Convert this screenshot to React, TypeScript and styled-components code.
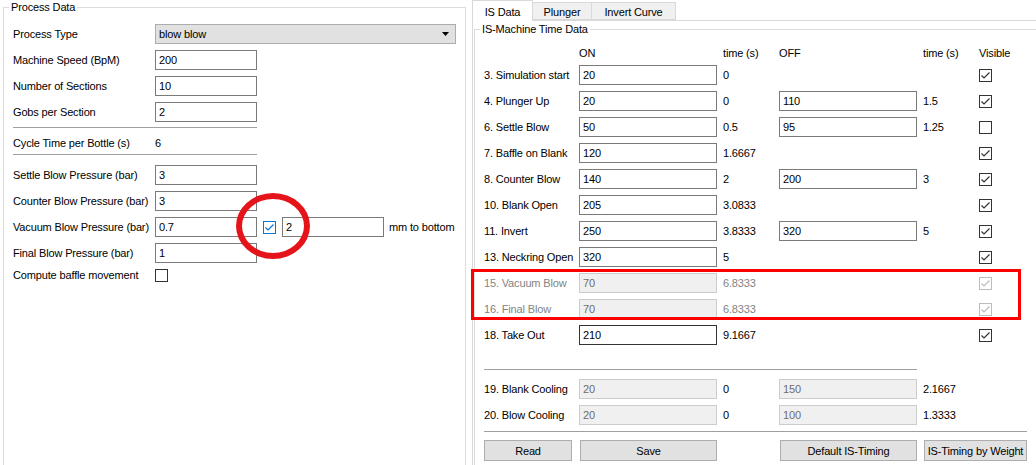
import React from "react";
import styled, { createGlobalStyle } from "styled-components";

const GlobalStyle = createGlobalStyle`
  body {
    margin: 0;
    background: #ffffff;
    font-family: "Liberation Sans", Arial, sans-serif;
    font-size: 11px;
    letter-spacing: -0.15px;
    color: #000000;
  }
`;

const Window = styled.div`
  position: relative;
  display: flex;
  width: 1036px;
  height: 465px;
  overflow: hidden;
  background: #ffffff;
`;

const GroupBox = styled.fieldset<{ $width: number; $left: number; $top?: number }>`
  box-sizing: border-box;
  flex: none;
  min-width: 0;
  width: ${p => p.$width}px;
  height: 520px;
  margin: ${p => p.$top ?? 0}px 0 0 ${p => p.$left}px;
  padding: 0;
  border: 1px solid #dcdcdc;
`;

const GroupTitle = styled.legend`
  margin-left: 5px;
  padding: 0 2px;
  line-height: 14px;
  font-size: 11px;
`;

const ProcessForm = styled.div`
  display: flex;
  flex-direction: column;
  padding: 7px 0 0 9px;
`;

const FormRow = styled.div<{ $h?: number }>`
  display: flex;
  align-items: center;
  height: ${p => p.$h ?? 26}px;
`;

const FieldLabel = styled.span`
  flex: none;
  width: 142px;
  white-space: nowrap;
`;

const TextField = styled.input<{ $w?: number; $focus?: boolean }>`
  box-sizing: border-box;
  flex: none;
  width: ${p => (p.$w ? `${p.$w}px` : "100%")};
  height: 20px;
  margin: 0;
  padding: 0 3px;
  border: 1px solid ${p => (p.disabled ? "#cccccc" : p.$focus ? "#333333" : "#7a7a7a")};
  background: ${p => (p.disabled ? "#f0f0f0" : "#ffffff")};
  color: ${p => (p.disabled ? "#6d6d6d" : "#000000")};
  font-family: inherit;
  font-size: 11px;
  letter-spacing: inherit;
  outline: none;
`;

const ComboBox = styled.div`
  box-sizing: border-box;
  display: flex;
  align-items: center;
  justify-content: space-between;
  width: 301px;
  height: 20px;
  padding: 0 6px 0 3px;
  border: 1px solid #adadad;
  background: #e1e1e1;
`;

const Divider = styled.div<{ $w: number; $mt: number; $mb: number }>`
  width: ${p => p.$w}px;
  height: 1px;
  margin: ${p => p.$mt}px 0 ${p => p.$mb}px;
  background: #a0a0a0;
`;

const Gap = styled.span<{ $w: number }>`
  flex: none;
  width: ${p => p.$w}px;
`;

const Box = styled.span<{ $tone: "dark" | "muted" | "blue" }>`
  box-sizing: border-box;
  display: inline-flex;
  align-items: center;
  justify-content: center;
  flex: none;
  width: 13px;
  height: 13px;
  background: #ffffff;
  border: 1px solid
    ${p => (p.$tone === "blue" ? "#0078d7" : p.$tone === "muted" ? "#bcbcbc" : "#333333")};
  color: ${p => (p.$tone === "blue" ? "#0078d7" : p.$tone === "muted" ? "#bcbcbc" : "#333333")};
`;

function CheckBox({ checked, tone = "dark" }: { checked?: boolean; tone?: "dark" | "muted" | "blue" }) {
  return (
    <Box $tone={tone}>
      {checked && (
        <svg width="11" height="11" viewBox="0 0 11 11">
          <path d="M1.5 5.5 L4 8 L9.5 2.5" fill="none" stroke="currentColor" strokeWidth="1.2" />
        </svg>
      )}
    </Box>
  );
}

/* right side: tab widget */

const RightArea = styled.div`
  flex: 1;
  min-width: 0;
  overflow: hidden;
`;

const TabWidget = styled.div`
  width: 620px;
  margin-left: 6px;
`;

const TabBar = styled.div`
  display: flex;
  align-items: flex-end;
  height: 20px;
`;

const Tab = styled.div<{ $active?: boolean; $w: number }>`
  position: relative;
  z-index: ${p => (p.$active ? 1 : 0)};
  box-sizing: border-box;
  display: flex;
  align-items: center;
  justify-content: center;
  width: ${p => p.$w}px;
  height: ${p => (p.$active ? 21 : 18)}px;
  margin-bottom: ${p => (p.$active ? -1 : 0)}px;
  padding-top: 1px;
  border: 1px solid #d9d9d9;
  border-bottom: ${p => (p.$active ? "none" : "1px solid #d9d9d9")};
  border-left: ${p => (p.$active ? "1px solid #d9d9d9" : "none")};
  background: ${p => (p.$active ? "#ffffff" : "#f0f0f0")};
`;

const TabPane = styled.div`
  height: 470px;
  border: 1px solid #d9d9d9;
  background: #ffffff;
`;

const TimeTable = styled.div`
  display: flex;
  flex-direction: column;
  padding: 8px 0 0 9px;
`;

const TimeRow = styled.div<{ $h?: number }>`
  display: grid;
  grid-template-columns: 95px 138px 62px 138px 62px 48px;
  align-items: center;
  height: ${p => p.$h ?? 26}px;
`;

const RowLabel = styled.span<{ $muted?: boolean }>`
  white-space: nowrap;
  color: ${p => (p.$muted ? "#838383" : "#000000")};
`;

const TimeValue = styled.span<{ $muted?: boolean }>`
  padding-left: 6px;
  white-space: nowrap;
  color: ${p => (p.$muted ? "#838383" : "#000000")};
`;

const Rule = styled.div<{ $span: string; $mt: number; $mb: number }>`
  display: grid;
  grid-template-columns: 95px 138px 62px 138px 62px 48px;
  margin: ${p => p.$mt}px 0 ${p => p.$mb}px;

  &::before {
    content: "";
    grid-column: ${p => p.$span};
    height: 1px;
    background: #a0a0a0;
  }
`;

const PushButton = styled.button<{ $w?: number; $col: string; $ml?: number }>`
  box-sizing: border-box;
  grid-column: ${p => p.$col};
  width: ${p => (p.$w ? `${p.$w}px` : "auto")};
  height: 21px;
  margin: 0 0 0 ${p => p.$ml ?? 0}px;
  padding: 0;
  border: 1px solid #adadad;
  background: #e1e1e1;
  color: #000000;
  font-family: inherit;
  font-size: 11px;
  letter-spacing: inherit;
`;

/* annotation marks drawn over the screenshot */

const RingMark = styled.div`
  position: absolute;
  left: 236px;
  top: 193px;
  width: 74px;
  height: 66px;
  box-sizing: border-box;
  border: 6px solid #e5141b;
  border-radius: 50%;
  pointer-events: none;
`;

const BoxMark = styled.div`
  position: absolute;
  left: 471px;
  top: 269px;
  width: 550px;
  height: 51px;
  box-sizing: border-box;
  border: 3px solid #ff0000;
  pointer-events: none;
`;

type TimingRow = {
  label: string;
  on: string;
  onTime: string;
  off?: string;
  offTime?: string;
  visible?: boolean;
  muted?: boolean;
  focus?: boolean;
};

const timings: TimingRow[] = [
  { label: "3. Simulation start", on: "20", onTime: "0", visible: true },
  { label: "4. Plunger Up", on: "20", onTime: "0", off: "110", offTime: "1.5", visible: true },
  { label: "6. Settle Blow", on: "50", onTime: "0.5", off: "95", offTime: "1.25", visible: false },
  { label: "7. Baffle on Blank", on: "120", onTime: "1.6667", visible: true },
  { label: "8. Counter Blow", on: "140", onTime: "2", off: "200", offTime: "3", visible: true },
  { label: "10. Blank Open", on: "205", onTime: "3.0833", visible: true },
  { label: "11. Invert", on: "250", onTime: "3.8333", off: "320", offTime: "5", visible: true },
  { label: "13. Neckring Open", on: "320", onTime: "5", visible: true },
  { label: "15. Vacuum Blow", on: "70", onTime: "6.8333", visible: true, muted: true },
  { label: "16. Final Blow", on: "70", onTime: "6.8333", visible: true, muted: true },
  { label: "18. Take Out", on: "210", onTime: "9.1667", visible: true, focus: true },
];

const cooling = [
  { label: "19. Blank Cooling", on: "20", onTime: "0", off: "150", offTime: "2.1667" },
  { label: "20. Blow Cooling", on: "20", onTime: "0", off: "100", offTime: "1.3333" },
];

function ProcessData() {
  const fields: [string, string][] = [
    ["Machine Speed (BpM)", "200"],
    ["Number of Sections", "10"],
    ["Gobs per Section", "2"],
  ];
  return (
    <GroupBox $width={463} $left={3}>
      <GroupTitle>Process Data</GroupTitle>
      <ProcessForm>
        <FormRow>
          <FieldLabel>Process Type</FieldLabel>
          <ComboBox>
            <span>blow blow</span>
            <svg width="7" height="4" viewBox="0 0 7 4">
              <path d="M0 0 H7 L3.5 4 Z" fill="#000000" />
            </svg>
          </ComboBox>
        </FormRow>
        {fields.map(([label, value]) => (
          <FormRow key={label}>
            <FieldLabel>{label}</FieldLabel>
            <TextField $w={102} value={value} readOnly />
          </FormRow>
        ))}
        <Divider $w={244} $mt={2} $mb={3} />
        <FormRow $h={23}>
          <FieldLabel>Cycle Time per Bottle (s)</FieldLabel>
          <span>6</span>
        </FormRow>
        <Divider $w={244} $mt={0} $mb={7} />
        <FormRow>
          <FieldLabel>Settle Blow Pressure (bar)</FieldLabel>
          <TextField $w={102} value="3" readOnly />
        </FormRow>
        <FormRow>
          <FieldLabel>Counter Blow Pressure (bar)</FieldLabel>
          <TextField $w={102} value="3" readOnly />
        </FormRow>
        <FormRow>
          <FieldLabel>Vacuum Blow Pressure (bar)</FieldLabel>
          <TextField $w={102} value="0.7" readOnly />
          <Gap $w={6} />
          <CheckBox checked tone="blue" />
          <Gap $w={6} />
          <TextField $w={102} value="2" readOnly />
          <Gap $w={5} />
          <span>mm to bottom</span>
        </FormRow>
        <FormRow>
          <FieldLabel>Final Blow Pressure (bar)</FieldLabel>
          <TextField $w={102} value="1" readOnly />
        </FormRow>
        <FormRow $h={18}>
          <FieldLabel>Compute baffle movement</FieldLabel>
          <CheckBox />
        </FormRow>
      </ProcessForm>
    </GroupBox>
  );
}

function MachineTimes() {
  return (
    <RightArea>
      <TabWidget>
        <TabBar>
          <Tab $active $w={61}>IS Data</Tab>
          <Tab $w={59}>Plunger</Tab>
          <Tab $w={84}>Invert Curve</Tab>
        </TabBar>
        <TabPane>
          <GroupBox $width={640} $left={1} $top={1}>
            <GroupTitle>IS-Machine Time Data</GroupTitle>
            <TimeTable>
              <TimeRow $h={18}>
                <span />
                <span>ON</span>
                <TimeValue>time (s)</TimeValue>
                <span>OFF</span>
                <TimeValue>time (s)</TimeValue>
                <span>Visible</span>
              </TimeRow>
              {timings.map(r => (
                <TimeRow key={r.label}>
                  <RowLabel $muted={r.muted}>{r.label}</RowLabel>
                  <TextField value={r.on} disabled={r.muted} $focus={r.focus} readOnly />
                  <TimeValue $muted={r.muted}>{r.onTime}</TimeValue>
                  {r.off ? <TextField value={r.off} readOnly /> : <span />}
                  {r.offTime ? <TimeValue>{r.offTime}</TimeValue> : <span />}
                  <CheckBox checked={r.visible} tone={r.muted ? "muted" : "dark"} />
                </TimeRow>
              ))}
              <Rule $span="1 / 5" $mt={21} $mb={6} />
              {cooling.map(r => (
                <TimeRow key={r.label}>
                  <RowLabel>{r.label}</RowLabel>
                  <TextField value={r.on} disabled readOnly />
                  <TimeValue>{r.onTime}</TimeValue>
                  <TextField value={r.off} disabled readOnly />
                  <TimeValue>{r.offTime}</TimeValue>
                  <span />
                </TimeRow>
              ))}
              <Rule $span="1 / 7" $mt={3} $mb={8} />
              <TimeRow $h={21}>
                <PushButton $col="1" $w={88}>Read</PushButton>
                <PushButton $col="2" $ml={1}>Save</PushButton>
                <PushButton $col="4" $ml={1}>Default IS-Timing</PushButton>
                <PushButton $col="5 / 7" $ml={7}>IS-Timing by Weight</PushButton>
              </TimeRow>
            </TimeTable>
          </GroupBox>
        </TabPane>
      </TabWidget>
    </RightArea>
  );
}

export default function App() {
  return (
    <Window>
      <GlobalStyle />
      <ProcessData />
      <MachineTimes />
      <RingMark />
      <BoxMark />
    </Window>
  );
}
